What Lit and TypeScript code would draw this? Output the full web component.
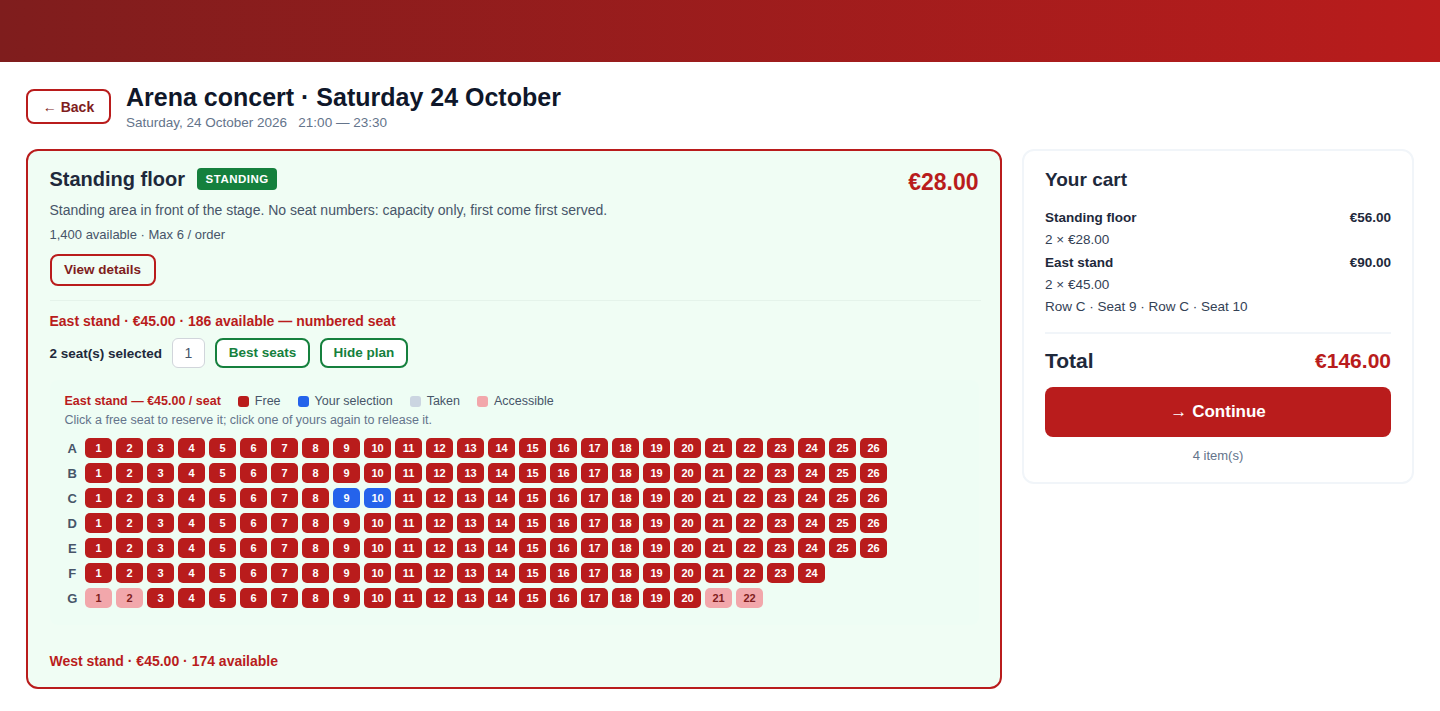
import { LitElement, html, css } from "lit";
import { customElement } from "lit/decorators.js";

const ROWS: [string, number][] = [["A",26],["B",26],["C",26],["D",26],["E",26],["F",24],["G",22]];

@customElement("app-root")
export class AppRoot extends LitElement {
  static styles = css`
    :host { display: block; font-family: "Liberation Sans", Arial, sans-serif; color: #1e293b; background: #fff; min-height: 711px; }
    * { box-sizing: border-box; }
    .band { height: 62px; background: linear-gradient(90deg, #7f1d1d, #b91c1c); }
    .page { padding: 21px 26px 22px; }
    .head { display: flex; align-items: flex-start; gap: 15px; margin-bottom: 18px; }
    .btn { font: 700 13.5px/1 "Liberation Sans", Arial, sans-serif; background: #fff; border: 2px solid #b91c1c; border-radius: 8px; color: #7f1d1d; display: inline-flex; align-items: center; justify-content: center; padding: 0; }
    .back { width: 85px; height: 35px; margin-top: 6px; font-size: 14px; }
    .view { width: 106px; height: 32px; background: transparent; }
    h1 { margin: 0; font-size: 25px; line-height: 29px; font-weight: 700; color: #0f172a; }
    .when { margin-top: 3px; font-size: 13.5px; line-height: 16px; color: #64748b; white-space: pre; }
    .grid { display: grid; grid-template-columns: 1fr 392px; gap: 20px; align-items: start; }
    .card { height: 540px; border: 2px solid #b91c1c; border-radius: 12px; background: #f0fdf4; padding: 15px 21.5px 0; }
    .top { display: flex; justify-content: space-between; }
    .name { display: flex; align-items: center; gap: 12px; height: 26px; }
    h2 { margin: 0; font-size: 20px; line-height: 26px; font-weight: 700; color: #1e293b; }
    .badge { background: #15803d; color: #fff; font-size: 11.5px; font-weight: 700; letter-spacing: .5px; border-radius: 4px; height: 22px; padding: 0 8.5px; display: flex; align-items: center; }
    .price { font-size: 23px; line-height: 28px; font-weight: 700; color: #b91c1c; margin-top: 2px; }
    .desc { margin-top: 4px; font-size: 14px; line-height: 20px; color: #475569; }
    .meta { margin-top: 6px; font-size: 13px; line-height: 18px; color: #475569; }
    .view { margin-top: 10px; }
    .rule { margin: 14px -2px 0 0; height: 1px; background: #e5f3ea; }
    .stand { font-size: 14px; line-height: 20px; font-weight: 700; color: #b91c1c; }
    .east { margin-top: 10px; }
    .ctrl { display: flex; align-items: center; margin-top: 7px; }
    .sel { font-size: 13.5px; font-weight: 700; color: #1e293b; width: 122.5px; }
    .qty { width: 33px; height: 30px; border: 1px solid #d1d5db; border-radius: 6px; background: #fff; color: #475569; font-size: 14px; display: flex; align-items: center; justify-content: center; margin-right: 10px; }
    .green { height: 30px; border-color: #15803d; color: #15803d; background: #fff; }
    .best { width: 95px; margin-right: 10px; }
    .hide { width: 88px; }
    .plan { margin-top: 12px; height: 245px; padding: 13px 15px; background: #eefdf4; border-radius: 8px; }
    .legend { display: flex; align-items: center; font-size: 12.5px; line-height: 16px; color: #475569; }
    .legend b { color: #b91c1c; margin-right: 17px; }
    .item { display: flex; align-items: center; gap: 6px; margin-right: 17px; }
    .sw { width: 11px; height: 11px; border-radius: 3px; }
    .hint { margin-top: 3px; font-size: 12.5px; line-height: 16px; color: #64748b; }
    .rows { margin-top: 10px; display: grid; gap: 5px; }
    .row { display: flex; gap: 4px; align-items: center; }
    .lab { width: 15.5px; margin-right: 1px; font-size: 13px; font-weight: 700; color: #475569; text-align: center; }
    .seat { width: 27px; height: 20px; border-radius: 5px; background: #b91c1c; color: #fff; font-size: 11px; font-weight: 700; display: flex; align-items: center; justify-content: center; }
    .mine { background: #2563eb; }
    .acc { background: #f2a7ab; color: #7f1d1d; }
    .west { margin-top: 26px; }
    .cart { height: 335px; border: 2px solid #f1f5f9; border-radius: 12px; background: #fff; padding: 17px 21px 0; }
    .cart h3 { margin: 0 0 15px; font-size: 19px; line-height: 24px; font-weight: 700; color: #1e293b; }
    .line { display: flex; justify-content: space-between; font-size: 13.5px; line-height: 22.3px; color: #334155; }
    .line b { color: #1e293b; }
    .hr { height: 2px; background: #f1f5f9; margin: 14px 0 12px; }
    .total { display: flex; justify-content: space-between; font-size: 21px; line-height: 30px; font-weight: 700; color: #1e293b; }
    .total span:last-child { color: #b91c1c; }
    .go { margin-top: 11px; height: 50px; border-radius: 8px; background: #b91c1c; color: #fff; font-size: 17px; font-weight: 700; display: flex; align-items: center; justify-content: center; gap: 5px; }
    .go i, .back i { font-style: normal; font-weight: 400; }
    .count { margin-top: 11px; text-align: center; font-size: 13px; line-height: 16px; color: #64748b; }
  `;

  render() {
    return html`
      <div class="band"></div>
      <div class="page">
        <div class="head">
          <button class="btn back"><i>←</i>&nbsp;Back</button>
          <div>
            <h1>Arena concert · Saturday 24 October</h1>
            <div class="when">Saturday, 24 October 2026   21:00 — 23:30</div>
          </div>
        </div>
        <div class="grid">
          <section class="card">
            <div class="top">
              <div class="name"><h2>Standing floor</h2><span class="badge">STANDING</span></div>
              <div class="price">€28.00</div>
            </div>
            <div class="desc">Standing area in front of the stage. No seat numbers: capacity only, first come first served.</div>
            <div class="meta">1,400 available · Max 6 / order</div>
            <button class="btn view">View details</button>
            <div class="rule"></div>
            <div class="stand east">East stand · €45.00 · 186 available — numbered seat</div>
            <div class="ctrl">
              <span class="sel">2 seat(s) selected</span>
              <span class="qty">1</span>
              <button class="btn green best">Best seats</button>
              <button class="btn green hide">Hide plan</button>
            </div>
            <div class="plan">
              <div class="legend">
                <b>East stand — €45.00 / seat</b>
                <span class="item"><span class="sw" style="background:#b91c1c"></span>Free</span>
                <span class="item"><span class="sw" style="background:#2563eb"></span>Your selection</span>
                <span class="item"><span class="sw" style="background:#cbd5e1"></span>Taken</span>
                <span class="item"><span class="sw" style="background:#f2a7ab"></span>Accessible</span>
              </div>
              <div class="hint">Click a free seat to reserve it; click one of yours again to release it.</div>
              <div class="rows">
                ${ROWS.map(([r, n]) => html`<div class="row"><span class="lab">${r}</span>${
                  Array.from({ length: n }, (_, i) => {
                    const s = i + 1;
                    const mine = r === "C" && (s === 9 || s === 10);
                    const acc = r === "G" && (s <= 2 || s >= 21);
                    return html`<span class="seat ${mine ? "mine" : ""} ${acc ? "acc" : ""}">${s}</span>`;
                  })
                }</div>`)}
              </div>
            </div>
            <div class="stand west">West stand · €45.00 · 174 available</div>
          </section>
          <aside class="cart">
            <h3>Your cart</h3>
            <div class="line"><b>Standing floor</b><b>€56.00</b></div>
            <div class="line">2 × €28.00</div>
            <div class="line"><b>East stand</b><b>€90.00</b></div>
            <div class="line">2 × €45.00</div>
            <div class="line">Row C · Seat 9 · Row C · Seat 10</div>
            <div class="hr"></div>
            <div class="total"><span>Total</span><span>€146.00</span></div>
            <div class="go"><i>→</i>Continue</div>
            <div class="count">4 item(s)</div>
          </aside>
        </div>
      </div>
    `;
  }
}
